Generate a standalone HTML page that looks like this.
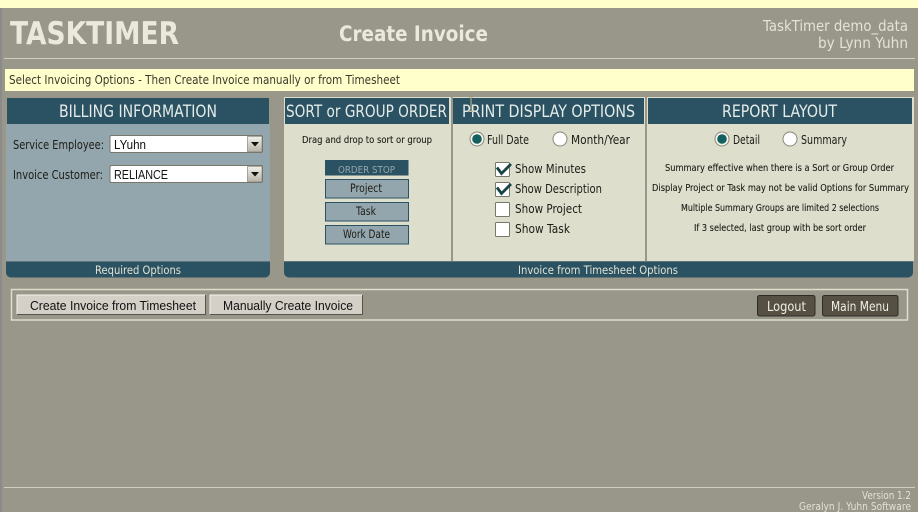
<!DOCTYPE html>
<html lang="en">
<head>
<meta charset="utf-8">
<title>TaskTimer - Create Invoice</title>
<style>
html,body{margin:0;padding:0;width:918px;height:512px;overflow:hidden;background:#98978a}
svg{display:block}
text{font-family:"DejaVu Sans",sans-serif;font-size:11px;fill:#24241e}
.a{font-family:"Liberation Sans",sans-serif}
.h{font-size:16.500px;fill:#e4ebe8}
.n{font-size:10px;fill:#1c1c16;stroke:#1c1c16;stroke-width:.12px}
.f{font-size:11.500px;fill:#e2e2d2}
.o{font-size:12.500px;fill:#1c1c16}
</style>
</head>
<body>
<svg width="918" height="512" viewBox="0 0 918 512" xmlns="http://www.w3.org/2000/svg">
<defs>
<linearGradient id="btn" x1="0" y1="0" x2="0" y2="1"><stop offset="0" stop-color="#f2f1ea"/><stop offset="1" stop-color="#b5b2a8"/></linearGradient>
</defs>
<rect width="918" height="512" fill="#98978a"/>
<rect x="0" y="8" width="2" height="504" fill="#8b8b8c"/>
<rect x="0" y="0" width="918" height="8" fill="#ffffcc"/>

<!-- header -->
<text x="10" y="44" font-weight="700" style="font-size:31px;fill:#ebe9dc" textLength="169" lengthAdjust="spacingAndGlyphs">TASKTIMER</text>
<text x="339" y="41" font-weight="700" style="font-size:21px;fill:#ebe9dc" textLength="149" lengthAdjust="spacingAndGlyphs">Create Invoice</text>
<text x="763" y="31" style="font-size:15px;fill:#e4e3d4" textLength="145" lengthAdjust="spacingAndGlyphs">TaskTimer demo_data</text>
<text x="818" y="48" style="font-size:15px;fill:#e4e3d4" textLength="90" lengthAdjust="spacingAndGlyphs">by Lynn Yuhn</text>
<rect x="4" y="58" width="911" height="1" fill="#cfcfc0"/>

<!-- message bar -->
<rect x="5" y="69" width="909" height="22" fill="#ffffcc"/>
<text x="9" y="84" style="font-size:12.500px;fill:#3a3a2c" textLength="391" lengthAdjust="spacingAndGlyphs">Select Invoicing Options - Then Create Invoice manually or from Timesheet</text>

<!-- billing panel -->
<rect x="6" y="124" width="264" height="137" fill="#94a6ad"/>
<rect x="7" y="98" width="262" height="26" fill="#2b5263"/>
<text class="h" x="59" y="117" textLength="158" lengthAdjust="spacingAndGlyphs">BILLING INFORMATION</text>
<text x="13" y="149" style="font-size:12.500px;fill:#1c1c16" textLength="91" lengthAdjust="spacingAndGlyphs">Service Employee:</text>
<text x="13" y="179" style="font-size:12.500px;fill:#1c1c16" textLength="90" lengthAdjust="spacingAndGlyphs">Invoice Customer:</text>

<rect x="110" y="135.500" width="152.500" height="17" rx="1.500" fill="#fff" stroke="#77776c"/>
<text class="a" x="114" y="149" style="font-size:13px;fill:#111" textLength="32" lengthAdjust="spacingAndGlyphs">LYuhn</text>
<rect x="247.500" y="136.500" width="14.500" height="15.500" fill="url(#btn)" stroke="#77776c" stroke-width=".6"/>
<path d="M251 142h8l-4 4.500z" fill="#111"/>

<rect x="110" y="165.500" width="152.500" height="17" rx="1.500" fill="#fff" stroke="#77776c"/>
<text class="a" x="114" y="179" style="font-size:13px;fill:#111" textLength="54" lengthAdjust="spacingAndGlyphs">RELIANCE</text>
<rect x="247.500" y="166.500" width="14.500" height="15.500" fill="url(#btn)" stroke="#77776c" stroke-width=".6"/>
<path d="M251 172h8l-4 4.500z" fill="#111"/>

<path d="M6 261.500h264v11a5 5 0 0 1-5 5h-254a5 5 0 0 1-5-5z" fill="#2b5263"/>
<text class="f" x="95" y="274" textLength="86" lengthAdjust="spacingAndGlyphs">Required Options</text>

<!-- options panels -->
<rect x="284" y="97" width="630" height="164" fill="#dedecd"/>
<rect x="451" y="97" width="2" height="164" fill="#98978a"/>
<rect x="645" y="97" width="2" height="164" fill="#98978a"/>
<rect x="285" y="98" width="164" height="26" fill="#2b5263"/>
<rect x="453" y="98" width="191" height="26" fill="#2b5263"/>
<rect x="648" y="98" width="264" height="26" fill="#2b5263"/>
<text class="h" x="286" y="117" textLength="161" lengthAdjust="spacingAndGlyphs">SORT or GROUP ORDER</text>
<text class="h" x="462" y="117" textLength="173" lengthAdjust="spacingAndGlyphs">PRINT DISPLAY OPTIONS</text>
<text class="h" x="722" y="117" textLength="115" lengthAdjust="spacingAndGlyphs">REPORT LAYOUT</text>
<!-- text cursor -->
<path d="M469 97.500h4M471 97.500v14M469 111.500h4" stroke="#c9b98c" stroke-width="1" fill="none"/>

<!-- sort -->
<text class="n" x="302" y="143" textLength="130" lengthAdjust="spacingAndGlyphs">Drag and drop to sort or group</text>
<rect x="325" y="160" width="83.500" height="15.500" fill="#2b5263"/>
<text x="338" y="173" style="font-size:10px;fill:#94a6ad" textLength="57" lengthAdjust="spacingAndGlyphs">ORDER STOP</text>
<rect x="325.500" y="179.500" width="83" height="18.500" fill="#94a6ad" stroke="#2b5263"/>
<rect x="325.500" y="202.500" width="83" height="18.500" fill="#94a6ad" stroke="#2b5263"/>
<rect x="325.500" y="225.500" width="83" height="18.500" fill="#94a6ad" stroke="#2b5263"/>
<text x="350" y="192" style="font-size:11.500px;fill:#1c1c16" textLength="32" lengthAdjust="spacingAndGlyphs">Project</text>
<text x="356" y="215" style="font-size:11.500px;fill:#1c1c16" textLength="20" lengthAdjust="spacingAndGlyphs">Task</text>
<text x="343" y="238" style="font-size:11.500px;fill:#1c1c16" textLength="47" lengthAdjust="spacingAndGlyphs">Work Date</text>

<!-- print options -->
<circle cx="477" cy="139" r="7" fill="#f6f6ee" stroke="#87877c"/>
<circle cx="477" cy="139" r="4.800" fill="#14605f"/>
<text class="o" x="487" y="144" textLength="42" lengthAdjust="spacingAndGlyphs">Full Date</text>
<circle cx="560" cy="139" r="7" fill="#fff" stroke="#87877c"/>
<text class="o" x="571" y="144" textLength="59" lengthAdjust="spacingAndGlyphs">Month/Year</text>

<rect x="495.500" y="162.500" width="14" height="14" rx="1" fill="#fff" stroke="#77776c"/>
<rect x="495.500" y="182.500" width="14" height="14" rx="1" fill="#fff" stroke="#77776c"/>
<rect x="495.500" y="202.500" width="14" height="14" rx="1" fill="#fff" stroke="#77776c"/>
<rect x="495.500" y="222.500" width="14" height="14" rx="1" fill="#fff" stroke="#77776c"/>
<path d="M497 167.500l4.500 6l9.500-9.500" fill="none" stroke="#174447" stroke-width="2.800"/>
<path d="M497 187.500l4.500 6l9.500-9.500" fill="none" stroke="#174447" stroke-width="2.800"/>
<text class="o" x="515" y="173" textLength="71" lengthAdjust="spacingAndGlyphs">Show Minutes</text>
<text class="o" x="515" y="193" textLength="87" lengthAdjust="spacingAndGlyphs">Show Description</text>
<text class="o" x="515" y="213" textLength="67" lengthAdjust="spacingAndGlyphs">Show Project</text>
<text class="o" x="515" y="233" textLength="55" lengthAdjust="spacingAndGlyphs">Show Task</text>

<!-- report layout -->
<circle cx="722" cy="139" r="7" fill="#f6f6ee" stroke="#87877c"/>
<circle cx="722" cy="139" r="4.800" fill="#14605f"/>
<text class="o" x="733" y="144" textLength="27" lengthAdjust="spacingAndGlyphs">Detail</text>
<circle cx="790" cy="139" r="7" fill="#fff" stroke="#87877c"/>
<text class="o" x="801" y="144" textLength="46" lengthAdjust="spacingAndGlyphs">Summary</text>
<text class="n" x="665" y="171" textLength="229" lengthAdjust="spacingAndGlyphs">Summary effective when there is a Sort or Group Order</text>
<text class="n" x="652" y="191" textLength="257" lengthAdjust="spacingAndGlyphs">Display Project or Task may not be valid Options for Summary</text>
<text class="n" x="681" y="211" textLength="198" lengthAdjust="spacingAndGlyphs">Multiple Summary Groups are limited 2 selections</text>
<text class="n" x="694" y="231" textLength="172" lengthAdjust="spacingAndGlyphs">If 3 selected, last group with be sort order</text>

<path d="M284 261.500h629v11a5 5 0 0 1-5 5h-619a5 5 0 0 1-5-5z" fill="#2b5263"/>
<text class="f" x="518" y="274" textLength="160" lengthAdjust="spacingAndGlyphs">Invoice from Timesheet Options</text>

<!-- action bar -->
<rect x="11.500" y="289.500" width="896" height="30.500" fill="none" stroke="#dedecd" stroke-width="1.500"/>
<rect x="17" y="295" width="188.500" height="19.500" fill="#d4d0c8"/>
<path d="M17 314.500V295H205.500" fill="none" stroke="#f6f5ee"/>
<path d="M17 314.500H205.500V295" fill="none" stroke="#55554c"/>
<text class="a" x="30" y="310" style="font-size:13px;fill:#111" textLength="166" lengthAdjust="spacingAndGlyphs">Create Invoice from Timesheet</text>
<rect x="210" y="295" width="152.500" height="19.500" fill="#d4d0c8"/>
<path d="M210 314.500V295H362.500" fill="none" stroke="#f6f5ee"/>
<path d="M210 314.500H362.500V295" fill="none" stroke="#55554c"/>
<text class="a" x="223" y="310" style="font-size:13px;fill:#111" textLength="130" lengthAdjust="spacingAndGlyphs">Manually Create Invoice</text>

<rect x="757.500" y="295.500" width="57.500" height="20.500" rx="2" fill="#565044" stroke="#2f2c26"/>
<text x="767" y="311" style="font-size:13px;fill:#f0f0e4" textLength="39" lengthAdjust="spacingAndGlyphs">Logout</text>
<rect x="822.500" y="295.500" width="75.500" height="20.500" rx="2" fill="#565044" stroke="#2f2c26"/>
<text x="831" y="311" style="font-size:13.500px;fill:#f0f0e4" textLength="58" lengthAdjust="spacingAndGlyphs">Main Menu</text>

<!-- footer -->
<rect x="4" y="487" width="911" height="1" fill="#cfcfc0"/>
<text x="862" y="499" style="font-size:10.500px;fill:#e2e2d2" textLength="49" lengthAdjust="spacingAndGlyphs">Version 1.2</text>
<text x="799" y="510" style="font-size:10.500px;fill:#e2e2d2" textLength="112" lengthAdjust="spacingAndGlyphs">Geralyn J. Yuhn Software</text>
</svg>
</body>
</html>
